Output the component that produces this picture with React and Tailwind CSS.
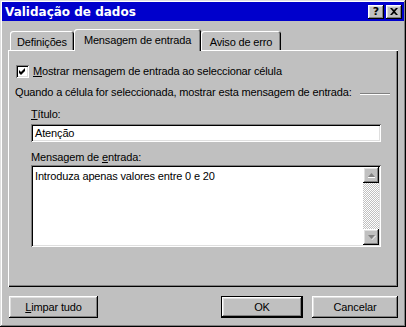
import React from 'react';

const raised =
  'shadow-[inset_-1px_-1px_0_#000,inset_1px_1px_0_#fff,inset_-2px_-2px_0_#808080,inset_2px_2px_0_#dfdfdf]';
const sunken =
  'shadow-[inset_1px_1px_0_#808080,inset_-1px_-1px_0_#fff,inset_2px_2px_0_#000,inset_-2px_-2px_0_#dfdfdf]';
const tabEdge = 'shadow-[inset_1px_1px_0_#fff,inset_-1px_0_0_#000,inset_-2px_0_0_#808080]';

const ArrowUp = () => (
  <svg width="9" height="6" viewBox="0 0 9 6">
    <path d="M1 5 L8 5 L8 6 L1 6 Z" fill="#fff" />
    <path d="M4.5 1 L8 5 L1 5 Z" fill="#808080" />
  </svg>
);

const ArrowDown = () => (
  <svg width="9" height="6" viewBox="0 0 9 6">
    <path d="M4.5 6 L8.5 1.5 L8.5 2.5 L5 6 Z" fill="#fff" />
    <path d="M1 1 L8 1 L4.5 5 Z" fill="#808080" />
  </svg>
);

const Tab = ({ label, width, active }) => (
  <div
    className={`${width} ${tabEdge} rounded-t-[3px] bg-[#c0c0c0] flex justify-center ${
      active ? 'h-[22px] -mb-[1px] relative z-10 pt-[5px]' : 'h-[19px] pt-[5px]'
    }`}
  >
    {label}
  </div>
);

const Button = ({ children, width, isDefault }) => (
  <div
    className={`${width} h-[22px] bg-[#c0c0c0] flex items-center justify-center ${
      isDefault
        ? 'shadow-[inset_0_0_0_1px_#000,inset_-2px_-2px_0_#000,inset_2px_2px_0_#fff,inset_-3px_-3px_0_#808080,inset_3px_3px_0_#dfdfdf]'
        : raised
    }`}
  >
    {children}
  </div>
);

export default function App() {
  return (
    <div
      className="w-[406px] h-[327px] bg-[#c0c0c0] p-[2px] text-black text-[11px] leading-[13px] tracking-[-0.15px] shadow-[inset_-1px_-1px_0_#000,inset_1px_1px_0_#dfdfdf,inset_-2px_-2px_0_#808080,inset_2px_2px_0_#fff]"
      style={{ fontFamily: '"Liberation Sans", Arial, sans-serif' }}
    >
      {/* barra de título */}
      <div className="h-[19px] bg-[#0000cc] flex items-center justify-between pl-[3px] pr-[2px]">
        <span
          className="text-white font-bold text-[12px] tracking-normal leading-none"
          style={{ fontFamily: '"DejaVu Sans", Verdana, sans-serif' }}
        >
          Validação de dados
        </span>
        <div className="flex gap-[2px]">
          <div className={`w-[16px] h-[14px] bg-[#c0c0c0] ${raised} flex items-center justify-center`}>
            <span
              className="font-bold text-[11px] leading-none tracking-normal"
              style={{ fontFamily: '"DejaVu Sans", sans-serif' }}
            >
              ?
            </span>
          </div>
          <div className={`w-[16px] h-[14px] bg-[#c0c0c0] ${raised} flex items-center justify-center`}>
            <svg width="8" height="7" viewBox="0 0 8 7">
              <path d="M0 0 H2 L4 2 L6 0 H8 L5 3.5 L8 7 H6 L4 5 L2 7 H0 L3 3.5 Z" fill="#000" />
            </svg>
          </div>
        </div>
      </div>

      <div className="px-[6px] pt-[8px]">
        {/* separadores */}
        <div className="flex items-end h-[21px] pl-[2px]">
          <Tab label="Definições" width="w-[64px]" />
          <Tab label="Mensagem de entrada" width="w-[127px]" active />
          <Tab label="Aviso de erro" width="w-[80px]" />
        </div>

        {/* painel */}
        <div className="h-[237px] w-[390px] flex flex-col shadow-[inset_1px_1px_0_#fff,inset_-1px_-1px_0_#000,inset_-2px_-2px_0_#808080]">
          <div className="flex items-center h-[13px] mt-[15px] pl-[8px]">
            <div className={`w-[13px] h-[13px] bg-white ${sunken} flex items-center justify-center`}>
              <svg width="7" height="7" viewBox="0 0 7 7">
                <path d="M0 2 L2 4 L6 0 L6 3 L2 7 L0 5 Z" fill="#000" />
              </svg>
            </div>
            <span className="ml-[4px]">
              <span className="underline">M</span>ostrar mensagem de entrada ao seleccionar célula
            </span>
          </div>

          <div className="flex items-center h-[14px] mt-[7px] pl-[7px] pr-[8px]">
            <span className="whitespace-nowrap">
              Quando a célula for seleccionada, mostrar esta mensagem de entrada:
            </span>
            <div className="flex-1 ml-[8px] h-[2px] border-t border-b border-t-[#808080] border-b-white mt-[3px]" />
          </div>

          <div className="h-[14px] mt-[8px] pl-[23px] flex items-center">
            <span>
              <span className="underline">T</span>ítulo:
            </span>
          </div>
          <div className={`ml-[23px] mt-[3px] w-[350px] h-[18px] bg-white ${sunken} flex items-center pl-[4px]`}>
            Atenção
          </div>

          <div className="h-[14px] mt-[8px] pl-[23px] flex items-center">
            <span>
              Mensagem de <span className="underline">e</span>ntrada:
            </span>
          </div>
          <div className={`ml-[23px] mt-[1px] w-[350px] h-[82px] bg-white ${sunken} p-[2px] flex`}>
            <div className="flex-1 pl-[2px] pt-[3px]">Introduza apenas valores entre 0 e 20</div>
            <div className="w-[16px] flex flex-col">
              <div className={`h-[16px] bg-[#c0c0c0] ${raised} flex items-center justify-center`}>
                <ArrowUp />
              </div>
              <div className="flex-1 bg-[image:repeating-conic-gradient(#c0c0c0_0_25%,#fff_0_50%)] bg-[length:2px_2px]" />
              <div className={`h-[16px] bg-[#c0c0c0] ${raised} flex items-center justify-center`}>
                <ArrowDown />
              </div>
            </div>
          </div>
        </div>

        {/* botões */}
        <div className="flex mt-[9px] pl-[1px]">
          <Button width="w-[89px]">
            <span>
              <span className="underline">L</span>impar tudo
            </span>
          </Button>
          <div className="flex-1" />
          <Button width="w-[82px]" isDefault>
            OK
          </Button>
          <div className="w-[9px]" />
          <Button width="w-[86px]">Cancelar</Button>
        </div>
      </div>
    </div>
  );
}
